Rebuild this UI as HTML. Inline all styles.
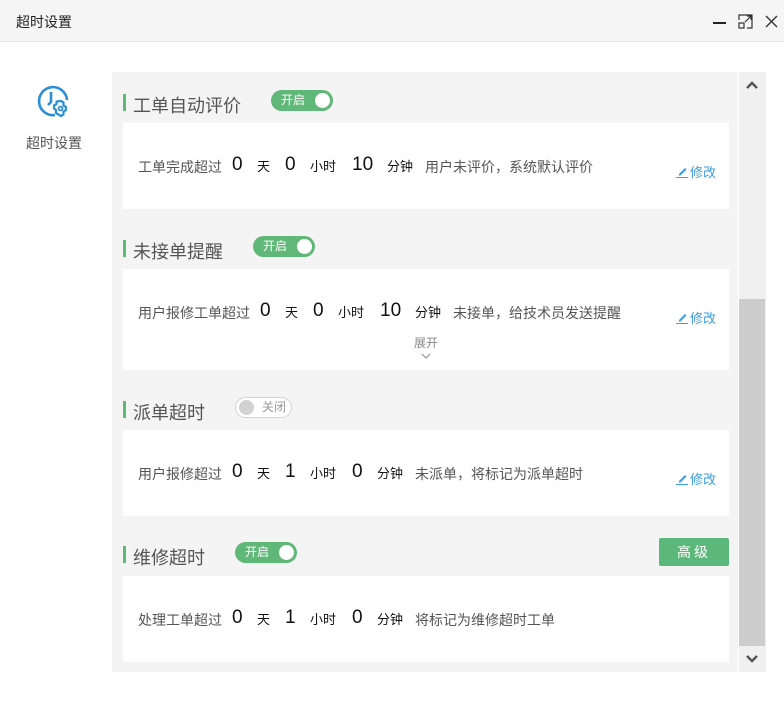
<!DOCTYPE html>
<html><head><meta charset="utf-8"><style>
*{margin:0;padding:0;box-sizing:border-box}
body{width:784px;height:708px;background:#fff;font-family:"Liberation Sans","Noto Sans CJK SC",sans-serif;position:relative;overflow:hidden;color:#333}
.a{position:absolute;white-space:nowrap}
.title{left:0;top:0;width:784px;height:42px;background:#f5f5f5;border-bottom:1px solid #e6e6e6}
.panel{left:112px;top:72px;width:626px;height:600px;background:#f4f4f4}
.card{left:123px;width:606px;background:#fff}
.bar{width:3px;height:17px;background:#5fb878}
.h{font-size:18px;color:#555}
.tg{height:21px;border-radius:11px;background:#5fb878;color:#fff;font-size:12px;line-height:21px;padding-left:10px}
.tg i{position:absolute;right:3px;top:3px;width:15px;height:15px;border-radius:50%;background:#fff}
.off{background:#fff;border:1px solid #d2d2d2;color:#999;padding-left:26px;line-height:19px}
.off i{left:3px;top:2px;background:#d2d2d2}
.l{font-size:14px;color:#555}
.n{font-size:19px;color:#111}
.u{font-size:13px;color:#111;margin-top:-2px}
.e{font-size:13px;color:#3a9ee4}
.e svg{vertical-align:-1px;margin-right:1px}
</style></head><body>
<div class="a title"></div>
<div class="a" style="left:16px;top:12px;font-size:14px;color:#222">超时设置</div>
<div class="a" style="left:713px;top:22px;width:13px;height:2px;background:#222"></div>
<svg class="a" style="left:738px;top:14px" width="15" height="15" viewBox="0 0 15 15" fill="none" stroke="#333" stroke-width="1.2"><path d="M1 6V1h13v13H9"/><rect x="1" y="9" width="5" height="5"/><path d="M7 8l6-6M9 2h4v4"/></svg>
<svg class="a" style="left:765px;top:15px" width="13" height="13" viewBox="0 0 13 13" stroke="#333" stroke-width="1.4"><path d="M1 1l11 11M12 1L1 12"/></svg>
<svg class="a" style="left:36px;top:84px" width="36" height="36" viewBox="0 0 36 36" fill="none" stroke="#2b8fd6" stroke-width="2.6"><path d="M19 31A14 14 0 1 1 31 16"/><path d="M15 8v10l-3 3"/><path d="M25 17l2.5 1.5v3L30 23v3l-2.5 1.5v3L25 32l-2.5-1.5L20 29v-3l-2-1.5v-3L20.5 20v-2.5z" stroke-width="2.2" stroke-linejoin="round"/><circle cx="24.5" cy="24.5" r="2" stroke-width="1.8"/></svg>
<div class="a" style="left:26px;top:133px;font-size:14px;color:#555">超时设置</div>
<div class="a panel"></div>
<div class="a" style="left:739px;top:72px;width:27px;height:600px;background:#f0f0f0"></div>
<div class="a" style="left:739px;top:299px;width:26px;height:347px;background:#cdcdcd"></div>
<svg class="a" style="left:745px;top:80px" width="14" height="10" viewBox="0 0 14 10" fill="none" stroke="#555" stroke-width="2.5"><path d="M2 8l5-5 5 5"/></svg>
<svg class="a" style="left:745px;top:654px" width="14" height="10" viewBox="0 0 14 10" fill="none" stroke="#555" stroke-width="2.5"><path d="M2 2l5 5 5-5"/></svg>

<div class="a bar" style="left:123px;top:94px"></div>
<div class="a h" style="left:133px;top:92px">工单自动评价</div>
<div class="a tg" style="left:271px;top:90px;width:62px">开启<i></i></div>
<div class="a card" style="top:123px;height:86px"></div>
<div class="a l" style="left:138px;top:157px">工单完成超过</div>
<div class="a n" style="left:232px;top:154px">0</div><div class="a u" style="left:257px;top:158px">天</div>
<div class="a n" style="left:285px;top:154px">0</div><div class="a u" style="left:310px;top:158px">小时</div>
<div class="a n" style="left:352px;top:154px">10</div><div class="a u" style="left:387px;top:158px">分钟</div>
<div class="a l" style="left:425px;top:157px">用户未评价，系统默认评价</div>
<div class="a e" style="left:676px;top:162px"><svg width="13" height="12" viewBox="0 0 13 12"><path d="M3 8L9 2l1.5 1.5-6 6H3z" fill="#3a9ee4"/><rect x="0" y="11" width="12" height="1" fill="#3a9ee4"/></svg>修改</div>

<div class="a bar" style="left:123px;top:240px"></div>
<div class="a h" style="left:133px;top:238px">未接单提醒</div>
<div class="a tg" style="left:253px;top:236px;width:62px">开启<i></i></div>
<div class="a card" style="top:269px;height:101px"></div>
<div class="a l" style="left:138px;top:303px">用户报修工单超过</div>
<div class="a n" style="left:260px;top:300px">0</div><div class="a u" style="left:285px;top:304px">天</div>
<div class="a n" style="left:313px;top:300px">0</div><div class="a u" style="left:338px;top:304px">小时</div>
<div class="a n" style="left:380px;top:300px">10</div><div class="a u" style="left:415px;top:304px">分钟</div>
<div class="a l" style="left:453px;top:303px">未接单，给技术员发送提醒</div>
<div class="a e" style="left:676px;top:308px"><svg width="13" height="12" viewBox="0 0 13 12"><path d="M3 8L9 2l1.5 1.5-6 6H3z" fill="#3a9ee4"/><rect x="0" y="11" width="12" height="1" fill="#3a9ee4"/></svg>修改</div>
<div class="a" style="left:414px;top:334px;font-size:12px;color:#888">展开</div>
<svg class="a" style="left:421px;top:353px" width="10" height="7" viewBox="0 0 10 7" fill="none" stroke="#888" stroke-width="1"><path d="M1 1l4 4 4-4"/></svg>

<div class="a bar" style="left:123px;top:401px"></div>
<div class="a h" style="left:133px;top:399px">派单超时</div>
<div class="a tg off" style="left:235px;top:397px;width:57px">关闭<i></i></div>
<div class="a card" style="top:430px;height:86px"></div>
<div class="a l" style="left:138px;top:464px">用户报修超过</div>
<div class="a n" style="left:232px;top:461px">0</div><div class="a u" style="left:257px;top:465px">天</div>
<div class="a n" style="left:285px;top:461px">1</div><div class="a u" style="left:310px;top:465px">小时</div>
<div class="a n" style="left:352px;top:461px">0</div><div class="a u" style="left:377px;top:465px">分钟</div>
<div class="a l" style="left:415px;top:464px">未派单，将标记为派单超时</div>
<div class="a e" style="left:676px;top:469px"><svg width="13" height="12" viewBox="0 0 13 12"><path d="M3 8L9 2l1.5 1.5-6 6H3z" fill="#3a9ee4"/><rect x="0" y="11" width="12" height="1" fill="#3a9ee4"/></svg>修改</div>

<div class="a bar" style="left:123px;top:546px"></div>
<div class="a h" style="left:133px;top:544px">维修超时</div>
<div class="a tg" style="left:235px;top:542px;width:62px">开启<i></i></div>
<div class="a" style="left:659px;top:538px;width:70px;height:28px;background:#5cb87a;border-radius:2px;color:#fff;font-size:14px;line-height:28px;text-align:center;letter-spacing:3px">高级</div>
<div class="a card" style="top:576px;height:86px"></div>
<div class="a l" style="left:138px;top:610px">处理工单超过</div>
<div class="a n" style="left:232px;top:607px">0</div><div class="a u" style="left:257px;top:611px">天</div>
<div class="a n" style="left:285px;top:607px">1</div><div class="a u" style="left:310px;top:611px">小时</div>
<div class="a n" style="left:352px;top:607px">0</div><div class="a u" style="left:377px;top:611px">分钟</div>
<div class="a l" style="left:415px;top:610px">将标记为维修超时工单</div>
</body></html>
